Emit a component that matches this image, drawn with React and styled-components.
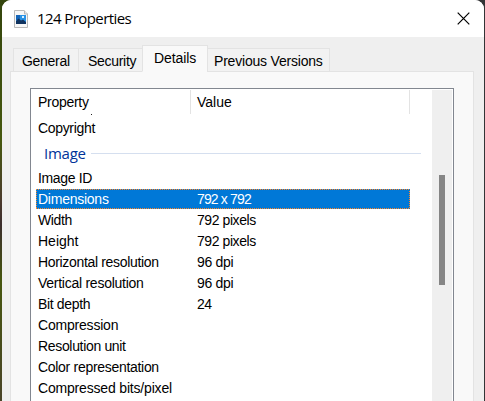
import React from "react";
import styled, { createGlobalStyle } from "styled-components";

const GlobalStyle = createGlobalStyle`
  * { box-sizing: border-box; }
  body { margin: 0; overflow: hidden; }
`;

const Desktop = styled.div`
  width: 485px;
  height: 401px;
  padding: 0 1px 0 2px;
  overflow: hidden;
  background:
    linear-gradient(90deg, transparent 50%, #333436 50%),
    linear-gradient(#34450d 0, #46580f 35%, #4b3a2c 50%, #3c2e2c 56%, #46560f 70%, #4a4428);
  font-family: "Liberation Sans", Arial, sans-serif;
  font-size: 14px;
  color: #000;
`;

const Dialog = styled.div`
  display: flex;
  flex-direction: column;
  height: 401px;
  background: #efefef;
  border-radius: 9px 9px 0 0;
  overflow: hidden;
`;

const TitleBar = styled.header`
  display: flex;
  align-items: center;
  flex: 0 0 37px;
  padding: 0 14px 0 12px;
  background: #fff;
`;

const Title = styled.h1`
  flex: 1;
  margin: 0 0 1px 9px;
  font: 400 15px/20px "Open Sans", sans-serif;
  letter-spacing: -0.58px;
`;

const CloseButton = styled.button`
  display: flex;
  padding: 0;
  border: 0;
  background: none;
`;

const TabList = styled.nav`
  display: flex;
  align-items: flex-end;
  flex: 0 0 35px;
  margin-bottom: -1px;
  padding-left: 11px;
  z-index: 1;
`;

const Tab = styled.button`
  width: ${(p) => p.$width}px;
  height: ${(p) => (p.$active ? 27 : 24)}px;
  margin: 0 -1px 0 0;
  padding: 0 0 0 ${(p) => p.$inset}px;
  border: 1px solid #e3e3e3;
  border-bottom-color: ${(p) => (p.$active ? "#f9f9f9" : "#e3e3e3")};
  background: ${(p) => (p.$active ? "#f9f9f9" : "#f2f2f2")};
  font: inherit;
  line-height: ${(p) => (p.$active ? 25 : 24)}px;
  letter-spacing: ${(p) => p.$tracking || 0}px;
  text-align: left;
  white-space: nowrap;
  color: #000;
`;

const TabPage = styled.main`
  flex: 1;
  min-height: 0;
  display: flex;
  margin: 0 10px 0 8px;
  padding: 16px 19px 0;
  border: 1px solid #e3e3e3;
  border-bottom: 0;
  background: #f9f9f9;
`;

const ListView = styled.section`
  flex: 1;
  display: flex;
  justify-content: space-between;
  padding: 1px 1px 0 5px;
  border: 1px solid #828790;
  border-bottom: 0;
  background: #fff;
`;

const Columns = styled.div`
  width: 374px;
`;

const HeaderRow = styled.div`
  display: flex;
  height: 24px;
`;

const HeaderCell = styled.div`
  width: ${(p) => p.$width}px;
  padding-left: ${(p) => p.$inset}px;
  border-right: 1px solid #e3e3e3;
  line-height: 25px;
  letter-spacing: ${(p) => p.$tracking || 0}px;
`;

const Remnant = styled.div`
  width: 1px;
  height: 1px;
  margin: 0 0 3px 55px;
  background: #222;
`;

const GroupHeading = styled.div`
  display: flex;
  align-items: center;
  height: 29px;
  margin: 0 -11px 0 8px;
  font: 400 15px/31px "Open Sans", sans-serif;
  letter-spacing: -0.25px;
  color: #003399;

  &::after {
    content: "";
    flex: 1;
    height: 1px;
    margin-left: 5px;
    background: #d5dfef;
  }
`;

const Row = styled.div`
  display: flex;
  height: ${(p) => (p.$selected ? 20 : 21)}px;
  margin-bottom: ${(p) => (p.$selected ? 1 : 0)}px;
  line-height: 21px;
  padding: 0 2px;
  color: ${(p) => (p.$selected ? "#fff" : "#000")};
  ${(p) =>
    p.$selected &&
    `background:
      repeating-linear-gradient(90deg, #ff8728 0 1px, #0078d7 1px 2px) top / 100% 1px no-repeat,
      repeating-linear-gradient(90deg, #ff8728 0 1px, #0078d7 1px 2px) bottom / 100% 1px no-repeat,
      repeating-linear-gradient(#ff8728 0 1px, #0078d7 1px 2px) left / 1px 100% no-repeat,
      repeating-linear-gradient(#ff8728 0 1px, #0078d7 1px 2px) right / 1px 100% no-repeat,
      #0078d7;`}
`;

const Name = styled.span`
  width: 159px;
  white-space: nowrap;
  letter-spacing: ${(p) => p.$tracking || 0}px;
`;

const Value = styled.span`
  letter-spacing: ${(p) => p.$tracking || 0}px;
`;

const ScrollTrack = styled.div`
  width: 20px;
  padding: 85px 7px 0;
  background: #efefef;
`;

const ScrollThumb = styled.div`
  height: 110px;
  background: #858585;
`;

const imageRows = [
  { name: "Image ID", tracking: -0.35 },
  { name: "Dimensions", tracking: -0.25, value: "792 x 792", valueTracking: -0.85, selected: true },
  { name: "Width", tracking: -0.4, value: "792 pixels", valueTracking: -0.42 },
  { name: "Height", value: "792 pixels", valueTracking: -0.42 },
  { name: "Horizontal resolution", tracking: -0.33, value: "96 dpi", valueTracking: -0.3 },
  { name: "Vertical resolution", tracking: -0.26, value: "96 dpi", valueTracking: -0.3 },
  { name: "Bit depth", tracking: -0.35, value: "24", valueTracking: -0.5 },
  { name: "Compression", tracking: -0.2 },
  { name: "Resolution unit", tracking: -0.33 },
  { name: "Color representation", tracking: -0.3 },
  { name: "Compressed bits/pixel", tracking: -0.18 },
];

function PictureFileIcon() {
  return (
    <svg width="14" height="18" viewBox="0 0 14 18">
      <path d="M.5.5h9.500l3.500 3.500v13.500H.5z" fill="#f7f7f7" stroke="#b9b9b9" />
      <path d="M10.500.5v3.500h3" fill="#e4e4e4" stroke="#b9b9b9" />
      <path d="M2 5h10v9H2z" fill="#2a93e6" />
      <path d="M2 5h4v5H2z" fill="#1565b8" />
      <path d="M8 6h2v2H8z" fill="#d8f1ff" />
      <path d="M2 11l2.500-2.500 2.500 2 2-1 3 2.500v2H2z" fill="#10335f" />
    </svg>
  );
}

function CloseIcon() {
  return (
    <svg width="13" height="13" viewBox="0 0 13 13">
      <path d="M.7.7l11.6 11.6M12.3.7L.7 12.3" stroke="#000" strokeWidth="1.2" />
    </svg>
  );
}

function PropertyRow({ name, tracking, value, valueTracking, selected }) {
  return (
    <Row $selected={selected}>
      <Name $tracking={tracking}>{name}</Name>
      <Value $tracking={valueTracking}>{value}</Value>
    </Row>
  );
}

export default function App() {
  return (
    <Desktop>
      <GlobalStyle />
      <Dialog>
        <TitleBar>
          <PictureFileIcon />
          <Title>124 Properties</Title>
          <CloseButton aria-label="Close">
            <CloseIcon />
          </CloseButton>
        </TitleBar>
        <TabList>
          <Tab $width={66} $inset={8} $tracking={-0.3}>General</Tab>
          <Tab $width={65} $inset={9} $tracking={-0.3}>Security</Tab>
          <Tab $width={66} $inset={11} $tracking={-0.1} $active>Details</Tab>
          <Tab $width={123} $inset={6} $tracking={-0.2}>Previous Versions</Tab>
        </TabList>
        <TabPage>
          <ListView>
            <Columns>
              <HeaderRow>
                <HeaderCell $width={155} $inset={2} $tracking={-0.28}>Property</HeaderCell>
                <HeaderCell $width={219} $inset={6}>Value</HeaderCell>
              </HeaderRow>
              <Remnant />
              <PropertyRow name="Copyright" tracking={-0.33} />
              <GroupHeading>Image</GroupHeading>
              {imageRows.map((row) => (
                <PropertyRow key={row.name} {...row} />
              ))}
            </Columns>
            <ScrollTrack>
              <ScrollThumb />
            </ScrollTrack>
          </ListView>
        </TabPage>
      </Dialog>
    </Desktop>
  );
}
